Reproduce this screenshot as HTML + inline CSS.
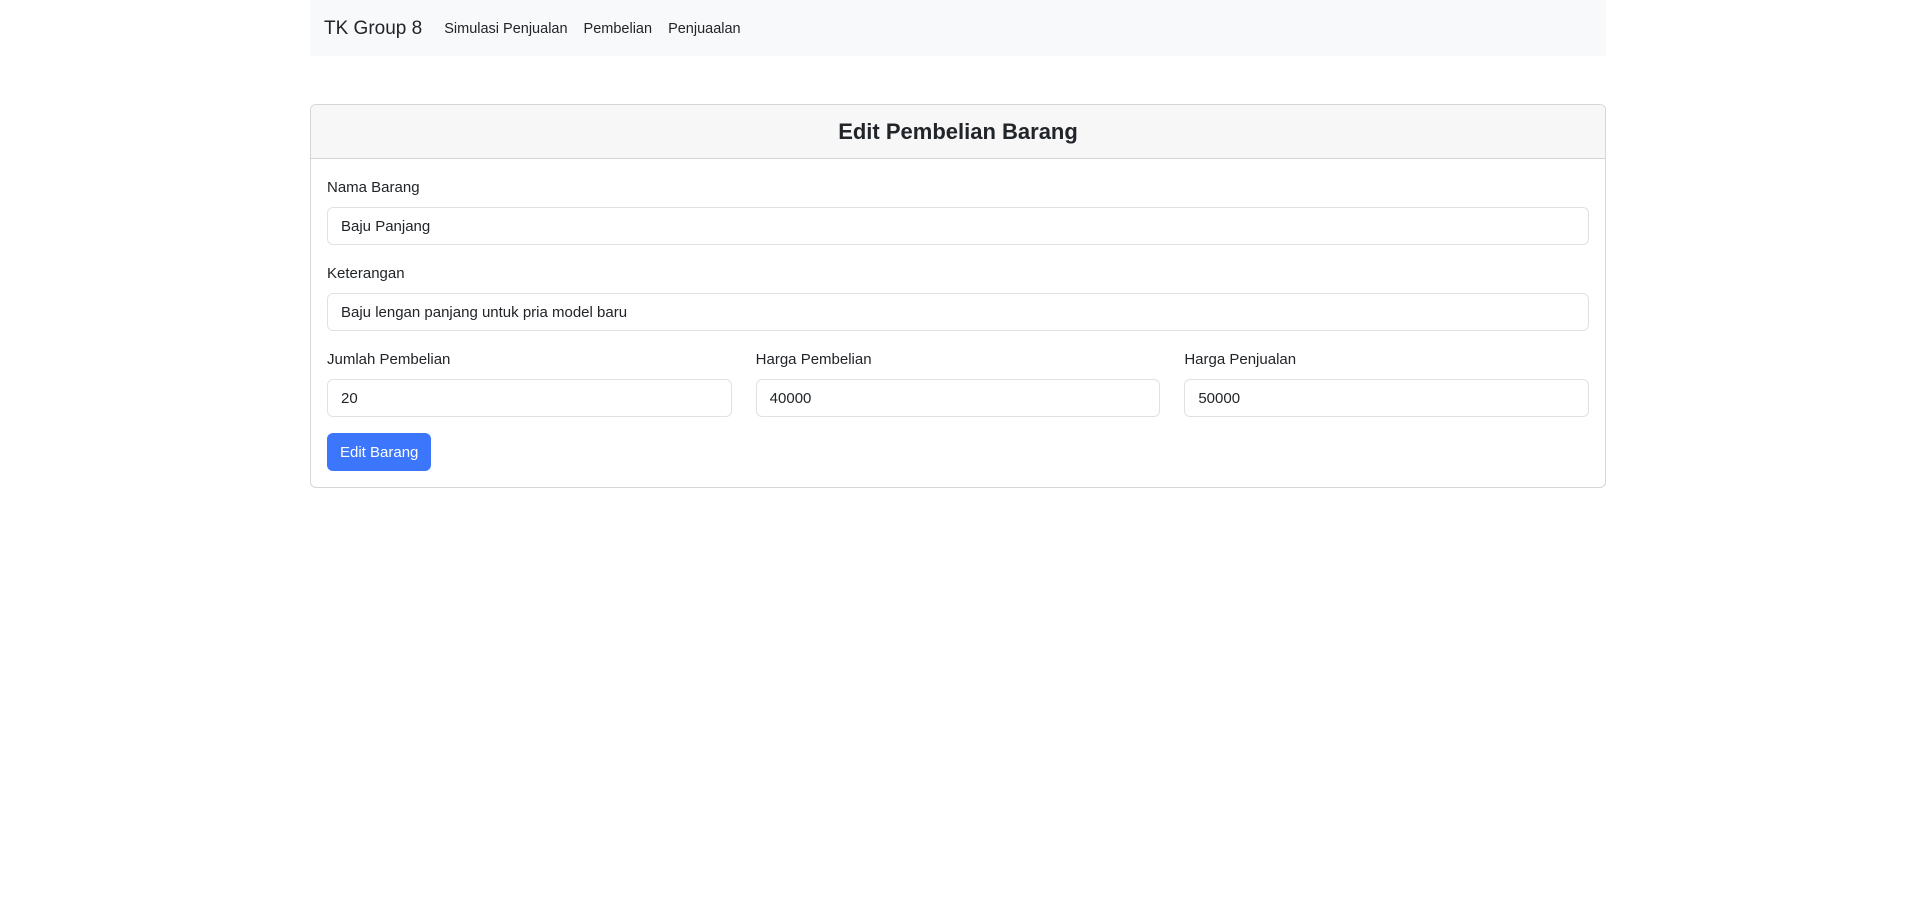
<!DOCTYPE html>
<html><head><meta charset="utf-8"><style>
*{box-sizing:border-box}
body{margin:0;font-family:"Liberation Sans",sans-serif;font-size:15px;color:#212529;background:#fff}
.c{position:absolute;left:310px;width:1296px}
.nav{top:0;height:56px;background:#f8f9fa;display:flex;align-items:center;padding-left:14px;padding-top:2px}
.brand{font-size:19px;margin-right:22px}
.nav a{font-size:14.5px;margin-right:16px;color:#212529;text-decoration:none}
.card{top:104px;border:1px solid #d6d6d6;border-radius:6px;overflow:hidden}
.hd{height:54px;background:#f7f7f7;border-bottom:1px solid #d6d6d6;display:flex;align-items:center;justify-content:center;font-size:22px;font-weight:bold;padding-top:1px}
.bd{padding:16px}
label{display:block;height:24px;line-height:26px;margin-bottom:8px;font-size:15px}
.in{height:38px;border:1px solid #dee2e6;border-radius:6px;padding:0 13px;line-height:38px;font-size:15px;margin-bottom:16px}
.row{display:flex;gap:24px}
.row>div{flex:1}
.btn{display:inline-block;height:38px;line-height:40px;padding:0 13px;background:#3b76fc;color:#fff;border-radius:6px;font-size:15px}
</style></head><body>
<div class="c nav"><span class="brand">TK Group 8</span><a>Simulasi Penjualan</a><a>Pembelian</a><a>Penjuaalan</a></div>
<div class="c card">
<div class="hd">Edit Pembelian Barang</div>
<div class="bd">
<label>Nama Barang</label><div class="in">Baju Panjang</div>
<label>Keterangan</label><div class="in">Baju lengan panjang untuk pria model baru</div>
<div class="row">
<div><label>Jumlah Pembelian</label><div class="in">20</div></div>
<div><label>Harga Pembelian</label><div class="in">40000</div></div>
<div><label>Harga Penjualan</label><div class="in">50000</div></div>
</div>
<div class="btn">Edit Barang</div>
</div></div>
</body></html>
